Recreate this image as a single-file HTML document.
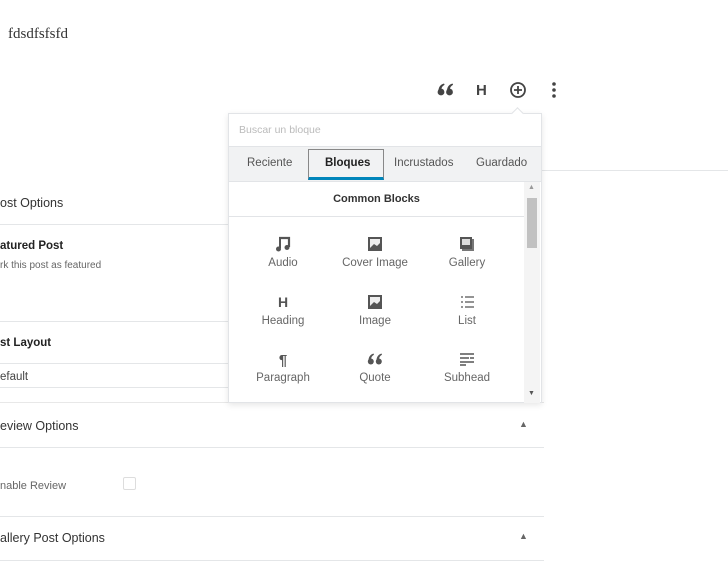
<!DOCTYPE html>
<html><head><meta charset="utf-8"><style>
*{margin:0;padding:0;box-sizing:border-box}
body{width:728px;height:572px;overflow:hidden;background:#fff;font-family:"Liberation Sans",sans-serif;color:#333;position:relative}
.a{position:absolute}
.hl{position:absolute;height:1px;background:#e4e6e8}
.t{font-size:11.5px;color:#444}
.b{font-weight:bold;color:#222}
.it{position:absolute;width:90px;text-align:center;font-size:11.5px;color:#666}
.it svg{display:block;margin:0 auto 5px}
</style></head><body>
<div class="a" style="left:8px;top:26px;font-family:'Liberation Serif',serif;font-size:15px;color:#333">fdsdfsfsfd</div>

<svg class="a" style="left:437px;top:83px" width="17" height="13"><g fill="#444"><circle cx="4" cy="9" r="3.4"/><path d="M1.5 8C1.5 4 3.5 1.5 7 0.5l0.6 1.3C5.5 3 4.5 4.5 4.5 6z"/><circle cx="12.5" cy="9" r="3.4"/><path d="M10 8C10 4 12 1.5 15.5 0.5l0.6 1.3C14 3 13 4.5 13 6z"/></g></svg>
<div class="a" style="left:476px;top:82px;font-size:15px;font-weight:bold;color:#444">H</div>
<svg class="a" style="left:509px;top:81px" width="18" height="18"><circle cx="9" cy="9" r="7" fill="none" stroke="#444" stroke-width="1.8"/><path d="M9 5v8M5 9h8" stroke="#444" stroke-width="1.8"/></svg>
<svg class="a" style="left:551px;top:81px" width="6" height="18"><circle cx="3" cy="3" r="1.8" fill="#444"/><circle cx="3" cy="9" r="1.8" fill="#444"/><circle cx="3" cy="15" r="1.8" fill="#444"/></svg>

<div class="hl" style="left:541px;top:170px;width:187px"></div>

<div class="a" style="left:0;top:196px;font-size:12.5px;color:#333">ost Options</div>
<div class="hl" style="left:0;top:224px;width:230px"></div>
<div class="a b" style="left:0;top:240px;font-size:11.5px">atured Post</div>
<div class="a" style="left:0;top:260px;font-size:10px;color:#666">rk this post as featured</div>
<div class="hl" style="left:0;top:321px;width:230px"></div>
<div class="a b" style="left:0;top:337px;font-size:11.5px">st Layout</div>
<div class="hl" style="left:0;top:363px;width:230px"></div>
<div class="a" style="left:0;top:371px;font-size:11.5px;color:#444">efault</div>
<div class="hl" style="left:0;top:387px;width:230px"></div>
<div class="hl" style="left:0;top:402px;width:544px;background:#e8e8e8"></div>
<div class="a" style="left:0;top:419px;font-size:12.5px;color:#333">eview Options</div>
<div class="a" style="left:519px;top:419px;font-size:9px;color:#666">▲</div>
<div class="hl" style="left:0;top:447px;width:544px"></div>
<div class="a" style="left:0;top:480px;font-size:11px;color:#666">nable Review</div>
<div class="a" style="left:123px;top:477px;width:13px;height:13px;border:1px solid #ddd;border-radius:2px"></div>
<div class="hl" style="left:0;top:516px;width:544px"></div>
<div class="a" style="left:0;top:531px;font-size:12.5px;color:#333">allery Post Options</div>
<div class="a" style="left:519px;top:531px;font-size:9px;color:#666">▲</div>
<div class="hl" style="left:0;top:560px;width:544px"></div>

<div class="a" style="left:228px;top:113px;width:314px;height:290px;background:#fff;border:1px solid #e2e4e7;box-shadow:0 2px 6px rgba(0,0,0,.1)">
 <div class="a" style="top:-5px;left:284px;width:9px;height:9px;background:#fff;border-left:1px solid #e2e4e7;border-top:1px solid #e2e4e7;transform:rotate(45deg)"></div>
 <div class="a" style="left:10px;top:10px;font-size:10.5px;color:#bbb">Buscar un bloque</div>
 <div class="a" style="left:0;top:32px;width:312px;height:35px;background:#f1f2f3;border-top:1px solid #e2e4e7"></div>
 <div class="a t" style="left:18px;top:43px;color:#555">Reciente</div>
 <div class="a" style="left:79px;top:35px;width:76px;height:31px;border:1px solid #888;border-bottom:3px solid #0085ba;background:#f1f2f3"></div>
 <div class="a t b" style="left:96px;top:43px">Bloques</div>
 <div class="a t" style="left:165px;top:43px;color:#555">Incrustados</div>
 <div class="a t" style="left:247px;top:43px;color:#555">Guardado</div>
 <div class="a" style="left:0;top:67px;width:312px;height:1px;background:#e2e4e7"></div>
 <div class="a" style="left:0;top:79px;width:295px;text-align:center;font-size:11px;font-weight:bold;color:#333">Common Blocks</div>
 <div class="a" style="left:0;top:102px;width:295px;height:1px;background:#e2e4e7"></div>
 <div class="a" style="left:295px;top:68px;width:16px;height:221px;background:#f4f4f4"></div>
 <div class="a" style="left:298px;top:84px;width:10px;height:50px;background:#c1c1c1"></div>
 <div class="a" style="left:299px;top:70px;font-size:7px;color:#999">▲</div>
 <div class="a" style="left:299px;top:276px;font-size:7px;color:#555">▼</div>

 <div class="it" style="left:9px;top:122px"><svg width="16" height="16"><path d="M4 2h10v9" stroke="#555" stroke-width="2.2" fill="none"/><path d="M5 2v10" stroke="#555" stroke-width="2"/><circle cx="3.5" cy="13" r="2.5" fill="#555"/><circle cx="12" cy="11.5" r="2.5" fill="#555"/></svg>Audio</div>
 <div class="it" style="left:101px;top:122px"><svg width="16" height="16"><rect x="1" y="1" width="14" height="14" fill="#555"/><rect x="3" y="3" width="10" height="9" fill="#eee"/><path d="M3 12l4-4 3 2 3-3v5z" fill="#555"/></svg>Cover Image</div>
 <div class="it" style="left:193px;top:122px"><svg width="16" height="16"><rect x="3" y="3" width="12" height="12" fill="#777"/><rect x="1" y="1" width="12" height="12" fill="#555"/><rect x="3" y="3" width="8" height="6" fill="#ddd"/></svg>Gallery</div>

 <div class="it" style="left:9px;top:180px"><svg width="16" height="16"><text x="8" y="13" text-anchor="middle" font-family="Liberation Sans" font-weight="bold" font-size="14" fill="#555">H</text></svg>Heading</div>
 <div class="it" style="left:101px;top:180px"><svg width="16" height="16"><rect x="1" y="1" width="14" height="14" fill="#555"/><rect x="3" y="3" width="10" height="9" fill="#eee"/><path d="M3 12l4-4 3 2 3-3v5z" fill="#555"/></svg>Image</div>
 <div class="it" style="left:193px;top:180px"><svg width="16" height="16"><path d="M2 3h2M2 8h2M2 13h2M6 3h9M6 8h9M6 13h9" stroke="#555" stroke-width="1.3"/></svg>List</div>

 <div class="it" style="left:9px;top:237px"><svg width="16" height="16"><text x="8" y="14" text-anchor="middle" font-family="Liberation Sans" font-weight="bold" font-size="15" fill="#555">¶</text></svg>Paragraph</div>
 <div class="it" style="left:101px;top:237px"><svg width="16" height="16"><g fill="#555" transform="translate(0,2)"><circle cx="3.8" cy="8.5" r="3"/><path d="M1.5 7.5C1.5 4 3.3 1.5 6.5 0.5l0.5 1.2C5 2.8 4.2 4.2 4.2 5.8z"/><circle cx="11.8" cy="8.5" r="3"/><path d="M9.5 7.5C9.5 4 11.3 1.5 14.5 0.5l0.5 1.2C13 2.8 12.2 4.2 12.2 5.8z"/></g></svg>Quote</div>
 <div class="it" style="left:193px;top:237px"><svg width="16" height="16"><path d="M1 3h14M1 7h9M11 7h4M1 11h14M1 14h6" stroke="#555" stroke-width="1.5"/></svg>Subhead</div>
</div>
</body></html>
